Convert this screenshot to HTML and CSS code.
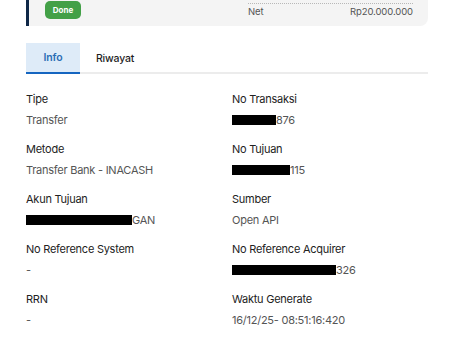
FILE: index.html
```html
<!DOCTYPE html>
<html lang="id">
<head>
<meta charset="utf-8">
<link rel="stylesheet" href="styles.css">
</head>
<body>
<div class="page">
  <div class="card">
    <div class="card-left">
      <span class="badge">Done</span>
    </div>
    <div class="card-right">
      <div class="net-row">
        <span>Net</span>
        <span>Rp20.000.000</span>
      </div>
    </div>
  </div>

  <div class="tabs">
    <div class="tab active">Info</div>
    <div class="tab">Riwayat</div>
  </div>

  <div class="info-grid">
    <div class="field">
      <div class="label">Tipe</div>
      <div class="value">Transfer</div>
    </div>
    <div class="field">
      <div class="label">No Transaksi</div>
      <div class="value"><span class="redact r44"></span>876</div>
    </div>
    <div class="field">
      <div class="label">Metode</div>
      <div class="value">Transfer Bank - INACASH</div>
    </div>
    <div class="field">
      <div class="label">No Tujuan</div>
      <div class="value"><span class="redact r58"></span>115</div>
    </div>
    <div class="field">
      <div class="label">Akun Tujuan</div>
      <div class="value"><span class="redact r106"></span>GAN</div>
    </div>
    <div class="field">
      <div class="label">Sumber</div>
      <div class="value">Open API</div>
    </div>
    <div class="field">
      <div class="label">No Reference System</div>
      <div class="value">-</div>
    </div>
    <div class="field">
      <div class="label">No Reference Acquirer</div>
      <div class="value"><span class="redact r104"></span>326</div>
    </div>
    <div class="field">
      <div class="label">RRN</div>
      <div class="value">-</div>
    </div>
    <div class="field">
      <div class="label">Waktu Generate</div>
      <div class="value">16/12/25- 08:51:16:420</div>
    </div>
  </div>
</div>
</body>
</html>
```

FILE: styles.css
```css
* { box-sizing: border-box; }

html, body {
  margin: 0;
  padding: 0;
  background: #ffffff;
}

body {
  font-family: Inter, "Noto Sans", sans-serif;
  color: #222222;
}

.page {
  padding: 0 26px;
  width: 454px;
}

.card {
  display: grid;
  grid-template-columns: 203px 1fr;
  height: 26px;
  background: #f4f4f4;
  border-left: 3px solid #0f2747;
  border-radius: 0 0 8px 0;
  padding: 1px 15px 0 16px;
}

.card-left {
  display: flex;
  align-items: flex-start;
}

.badge {
  display: flex;
  align-items: center;
  justify-content: center;
  width: 36px;
  height: 18px;
  background: #43a047;
  color: #ffffff;
  border-radius: 5px;
  font-size: 8px;
  font-weight: 700;
}

.card-right {
  padding-top: 2px;
}

.net-row {
  display: flex;
  justify-content: space-between;
  border-top: 1px dotted #b8b8b8;
  padding-top: 1px;
  font-size: 9.5px;
  line-height: 13px;
  color: #555555;
  letter-spacing: -0.1px;
}

.tabs {
  display: flex;
  margin-top: 17px;
  border-bottom: 2px solid #ececec;
}

.tab {
  height: 31px;
  display: flex;
  align-items: center;
  font-size: 10.5px;
  font-weight: 500;
  color: #1e1e1e;
  padding: 0 16px;
  margin-bottom: -2px;
  letter-spacing: -0.2px;
}

.tab.active {
  width: 54px;
  justify-content: center;
  padding: 0;
  background: #deebf8;
  color: #2a6db5;
  font-weight: 600;
  border-bottom: 2px solid #1565c0;
}

.info-grid {
  display: grid;
  grid-template-columns: 196px 196px;
  column-gap: 10px;
  row-gap: 13px;
  margin-top: 17px;
}

.field {
  display: flex;
  flex-direction: column;
  gap: 5px;
}

.label {
  font-size: 11px;
  line-height: 16px;
  color: #222222;
  letter-spacing: -0.25px;
}

.value {
  font-size: 11px;
  line-height: 16px;
  color: #555555;
  letter-spacing: -0.25px;
  display: flex;
  align-items: center;
}

.redact {
  display: inline-block;
  height: 10px;
  background: #000000;
}

.r44 { width: 44px; }
.r58 { width: 58px; }
.r104 { width: 104px; }
.r106 { width: 106px; }
```
